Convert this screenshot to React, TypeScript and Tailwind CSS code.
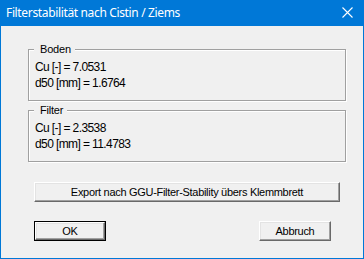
import React from "react";

const font = { fontFamily: '"Liberation Sans", Arial, sans-serif' };

function Btn({ children, def, className }: { children: React.ReactNode; def?: boolean; className?: string }) {
  const inner = (
    <div className="flex-1 h-full flex items-center justify-center border border-t-white border-l-white border-b-[#696969] border-r-[#696969] shadow-[inset_-1px_-1px_0_#a0a0a0,inset_1px_1px_0_#e3e3e3] bg-[#f0f0f0] text-[11px] tracking-[-0.3px] text-black leading-none">
      {children}
    </div>
  );
  if (def) {
    return <div className={`flex border border-black h-[20px] ${className ?? ""}`}>{inner}</div>;
  }
  return <div className={`flex h-[20px] ${className ?? ""}`}>{inner}</div>;
}

function Group({ label, lines, className }: { label: string; lines: string[]; className?: string }) {
  return (
    <div className={`relative border border-[#a0a0a0] shadow-[inset_1px_1px_0_#fff,1px_1px_0_#fff] h-[52px] pl-[6px] pt-[9px] ${className ?? ""}`}>
      <div className="absolute left-[5px] top-[-9px] pl-[6px] pr-[4px] bg-[#f0f0f0] text-[11px] tracking-[-0.2px] leading-[16px] text-black">
        {label}
      </div>
      {lines.map((l) => (
        <div key={l} className="text-[12px] tracking-[-0.6px] leading-[16px] text-black">
          {l}
        </div>
      ))}
    </div>
  );
}

export default function App() {
  return (
    <div style={font} className="w-[364px] h-[259px] bg-[#0078d7] flex flex-col px-[1px] pb-[1px]">
      <div className="h-[26px] flex items-center justify-between pl-[5px] pr-[10px] shrink-0">
        <span className="text-white text-[12px] tracking-[-0.35px] leading-none" style={{ fontFamily: '"Noto Sans", "Liberation Sans", sans-serif' }}>
          Filterstabilität nach Cistin / Ziems
        </span>
        <svg width="11" height="11" viewBox="0 0 11 11" className="mb-[1px]">
          <path d="M0.5 0.5 L10.5 10.5 M10.5 0.5 L0.5 10.5" stroke="white" strokeWidth="1.1" />
        </svg>
      </div>
      <div className="flex-1 bg-[#f0f0f0] pt-[23px] pl-[27px] pr-[17px] flex flex-col">
        <Group label="Boden" lines={["Cu [-] = 7.0531", "d50 [mm] = 1.6764"]} />
        <Group className="mt-[9px]" label="Filter" lines={["Cu [-] = 2.3538", "d50 [mm] = 11.4783"]} />
        <Btn className="mt-[20px] ml-[6px] w-[306px]">Export nach GGU-Filter-Stability übers Klemmbrett</Btn>
        <div className="mt-[19px] ml-[6px] w-[297px] flex justify-between">
          <Btn def className="w-[72px]">OK</Btn>
          <Btn className="w-[72px]">Abbruch</Btn>
        </div>
      </div>
    </div>
  );
}
